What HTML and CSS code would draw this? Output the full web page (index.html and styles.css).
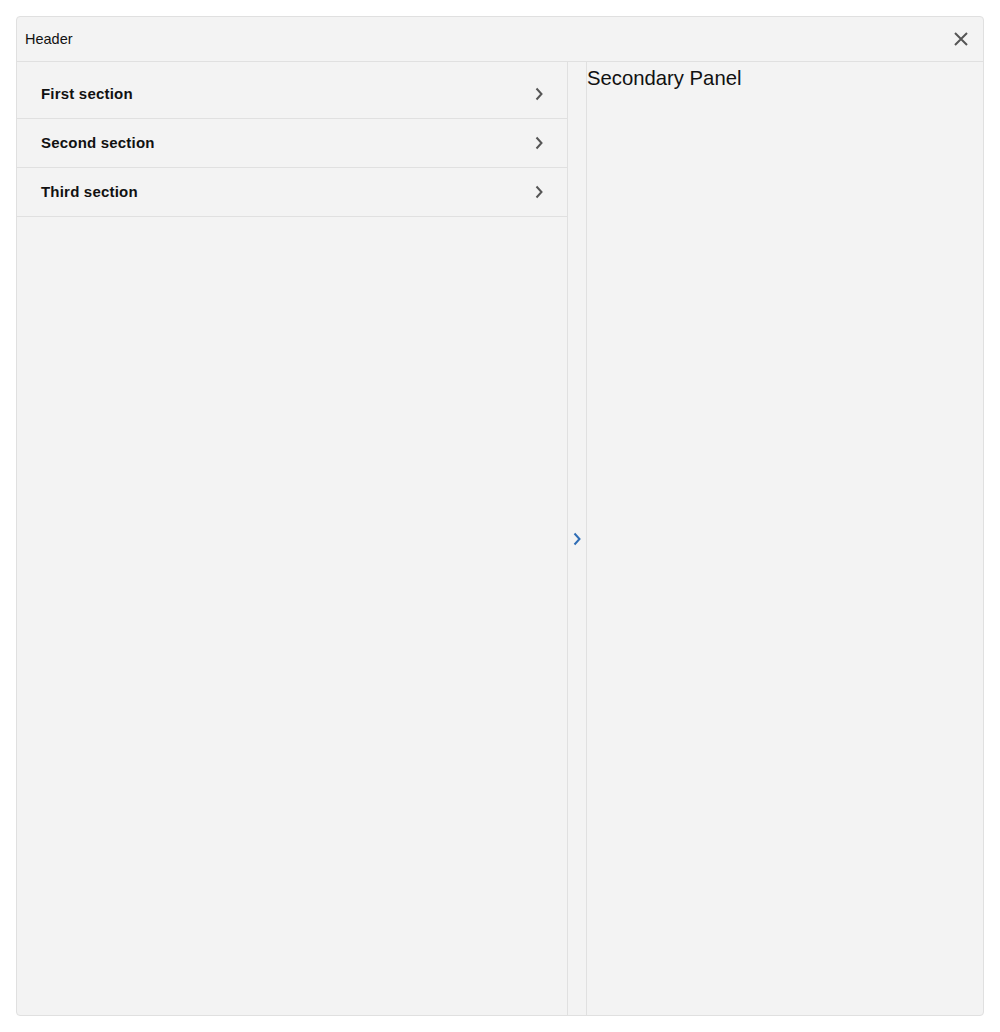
FILE: index.html
```html
<!DOCTYPE html>
<html>
<head>
<meta charset="utf-8">
<link rel="stylesheet" href="styles.css">
</head>
<body>
<div class="dialog">
  <div class="header">
    <span class="header-title">Header</span>
    <button class="close" aria-label="Close">
      <svg width="16" height="16" viewBox="0 0 16 16"><path d="M2 2 L14 14 M14 2 L2 14" stroke="#555" stroke-width="2" fill="none"/></svg>
    </button>
  </div>
  <div class="body">
    <div class="primary">
      <ul class="list">
        <li class="item"><span>First section</span><svg class="chev" width="10" height="14" viewBox="0 0 10 14"><path d="M2.5 1.5 L7.5 7 L2.5 12.5" stroke="#555" stroke-width="2" fill="none"/></svg></li>
        <li class="item"><span>Second section</span><svg class="chev" width="10" height="14" viewBox="0 0 10 14"><path d="M2.5 1.5 L7.5 7 L2.5 12.5" stroke="#555" stroke-width="2" fill="none"/></svg></li>
        <li class="item"><span>Third section</span><svg class="chev" width="10" height="14" viewBox="0 0 10 14"><path d="M2.5 1.5 L7.5 7 L2.5 12.5" stroke="#555" stroke-width="2" fill="none"/></svg></li>
      </ul>
    </div>
    <div class="toggle">
      <svg width="10" height="14" viewBox="0 0 10 14"><path d="M2.5 1.5 L7.5 7 L2.5 12.5" stroke="#2f6db5" stroke-width="2" fill="none"/></svg>
    </div>
    <div class="secondary">
      <div class="secondary-title">Secondary Panel</div>
    </div>
  </div>
</div>
</body>
</html>
```
FILE: styles.css
```css
html, body {
  margin: 0;
  padding: 0;
  background: #ffffff;
}
body {
  padding: 16px;
  font-family: "Liberation Sans", Arial, sans-serif;
  color: #111;
}
.dialog {
  width: 966px;
  height: 998px;
  border: 1px solid #e0e0e0;
  border-radius: 4px;
  background: #f3f3f3;
  display: flex;
  flex-direction: column;
  overflow: hidden;
}
.header {
  height: 44px;
  flex: none;
  border-bottom: 1px solid #e0e0e0;
  display: flex;
  align-items: center;
  justify-content: space-between;
  padding: 0 12px 0 8px;
}
.header-title {
  font-size: 14.5px;
  color: #111;
}
.close {
  border: 0;
  background: none;
  padding: 0;
  width: 20px;
  height: 20px;
  display: flex;
  align-items: center;
  justify-content: center;
}
.body {
  flex: 1;
  display: flex;
  min-height: 0;
}
.primary {
  width: 550px;
  flex: none;
  border-right: 1px solid #e0e0e0;
}
.list {
  list-style: none;
  margin: 0;
  padding: 8px 0 0 0;
}
.item {
  box-sizing: border-box;
  height: 49px;
  border-bottom: 1px solid #e0e0e0;
  display: flex;
  align-items: center;
  justify-content: space-between;
  padding: 0 23px 2px 24px;
  font-size: 15px;
  font-weight: bold;
  color: #111;
  letter-spacing: 0.2px;
}
.chev {
  display: block;
  margin-top: 1px;
}
.toggle {
  width: 18px;
  flex: none;
  border-right: 1px solid #e0e0e0;
  display: flex;
  align-items: center;
  justify-content: center;
}
.toggle svg {
  margin-top: 1px;
}
.secondary {
  flex: 1;
  padding-top: 4px;
}
.secondary-title {
  font-size: 20.3px;
  line-height: 24px;
  color: #111;
}
```
